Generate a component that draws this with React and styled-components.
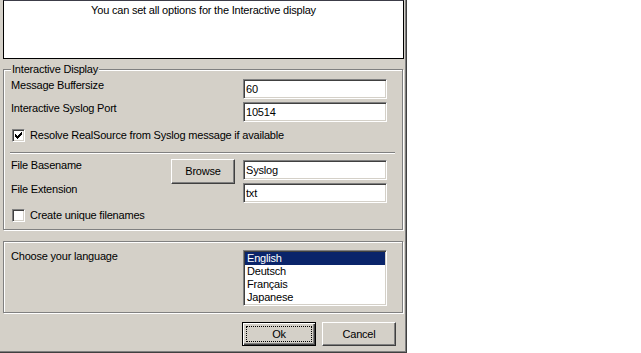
import React from 'react';
import styled, { createGlobalStyle } from 'styled-components';

const Global = createGlobalStyle`
  html, body { margin: 0; padding: 0; background: #fff; }
  body { font-family: "Liberation Sans", Arial, sans-serif; font-size: 11px; }
`;

const Dialog = styled.div`
  box-sizing: border-box;
  width: 407px;
  height: 353px;
  background: #d4d0c8;
  padding: 0 2px 0 3px;
  border-right: 1px solid #404040;
  border-bottom: 1px solid #404040;
  box-shadow: inset -1px -1px 0 #808080;
  display: flex;
  flex-direction: column;
  font-family: "Liberation Sans", Arial, sans-serif;
  font-size: 11px;
  line-height: 13px;
  letter-spacing: -0.2px;
  color: #000;
`;

const Description = styled.div`
  box-sizing: border-box;
  height: 59px;
  background: #fff;
  border: 1px solid #000;
  border-top-color: #3c3c48;
  padding-top: 3px;
  text-align: center;
`;

const Group = styled.fieldset`
  margin: ${(p) => p.$top}px 1px 0 0;
  padding: ${(p) => p.$pad};
  border: 1px solid #808080;
  box-shadow: 1px 1px 0 #fff, inset 1px 1px 0 #fff;
  min-inline-size: auto;
  display: flex;
  flex-direction: column;
`;

const Legend = styled.legend`
  margin: 0;
  padding: 0 1px;
  background: #d4d0c8;
  line-height: 13px;
`;

const FieldRow = styled.div`
  display: flex;
  align-items: flex-start;
  margin-top: ${(p) => p.$mt || 0}px;
`;

const Label = styled.span`
  flex: 1;
  line-height: 13px;
  margin-top: ${(p) => p.$mt || 0}px;
`;

const TextInput = styled.input`
  box-sizing: border-box;
  width: 144px;
  height: 20px;
  margin: 0;
  padding: 0 2px;
  font: inherit;
  letter-spacing: inherit;
  color: #000;
  background: #fff;
  border: 1px solid;
  border-color: #808080 #fff #fff #808080;
  box-shadow: inset 1px 1px 0 #404040, inset -1px -1px 0 #d4d0c8;
  outline: none;
`;

const CheckRow = styled.label`
  display: flex;
  align-items: center;
  gap: 5px;
  margin-top: ${(p) => p.$mt}px;
  padding-left: 1px;
  line-height: 13px;
`;

const CheckBox = styled.span`
  box-sizing: border-box;
  width: 13px;
  height: 13px;
  flex: none;
  background: #fff;
  border: 1px solid;
  border-color: #808080 #fff #fff #808080;
  box-shadow: inset 1px 1px 0 #404040, inset -1px -1px 0 #d4d0c8;
  display: flex;
  align-items: center;
  justify-content: center;
`;

const Separator = styled.div`
  height: 0;
  border-top: 1px solid #808080;
  border-bottom: 1px solid #fff;
  margin: 10px -8px 0 -1px;
`;

const FileGrid = styled.div`
  display: grid;
  grid-template-columns: 1fr 64px 144px;
  grid-template-rows: 20px 20px;
  column-gap: 8px;
  row-gap: 3px;
  margin-top: 6px;
`;

const Button = styled.button`
  box-sizing: border-box;
  width: ${(p) => p.$w}px;
  height: ${(p) => p.$h}px;
  margin: 0;
  padding: ${(p) => (p.$default ? '3px' : '0')};
  font: inherit;
  letter-spacing: inherit;
  color: #000;
  background: #d4d0c8;
  border: 1px solid;
  border-color: ${(p) => (p.$default ? '#000' : '#fff #404040 #404040 #fff')};
  box-shadow: ${(p) =>
    p.$default
      ? 'inset 1px 1px 0 #fff, inset -1px -1px 0 #404040, inset -2px -2px 0 #808080'
      : 'inset -1px -1px 0 #808080'};
  display: flex;
  align-items: center;
  justify-content: center;
  cursor: default;
`;

const BrowseButton = styled(Button)`
  grid-column: 2;
  grid-row: 1 / span 2;
  margin-top: -1px;
  align-self: start;
`;

const FocusRect = styled.span`
  flex: 1;
  align-self: stretch;
  border: 1px dotted #000;
  display: flex;
  align-items: center;
  justify-content: center;
`;

const ListBox = styled.div`
  box-sizing: border-box;
  width: 144px;
  height: 56px;
  padding: 1px;
  background: #fff;
  border: 1px solid;
  border-color: #808080 #fff #fff #808080;
  box-shadow: inset 1px 1px 0 #404040, inset -1px -1px 0 #d4d0c8;
  display: flex;
  flex-direction: column;
`;

const ListItem = styled.div`
  height: 13px;
  line-height: 13px;
  padding-left: 2px;
  background: ${(p) => (p.$selected ? '#0a246a' : 'transparent')};
  color: ${(p) => (p.$selected ? '#fff' : '#000')};
`;

const ButtonRow = styled.div`
  display: flex;
  justify-content: flex-end;
  gap: 6px;
  margin-top: 9px;
  padding-right: 8px;
`;

const Check = () => (
  <svg width="7" height="7" viewBox="0 0 7 7" shapeRendering="crispEdges">
    <path
      fill="#000"
      d="M6 0h1v1h-1z M5 1h2v1h-2z M0 2h1v1h-1z M4 2h3v1h-3z M0 3h2v1h-2z M3 3h3v1h-3z M0 4h5v1h-5z M1 5h3v1h-3z M2 6h1v1h-1z"
    />
  </svg>
);

export default function App() {
  return (
    <>
      <Global />
      <Dialog>
        <Description>You can set all options for the Interactive display</Description>

        <Group $top={4} $pad="3px 15px 7px 7px">
          <Legend>Interactive Display</Legend>
          <FieldRow>
            <Label>Message Buffersize</Label>
            <TextInput defaultValue="60" readOnly />
          </FieldRow>
          <FieldRow $mt={3}>
            <Label>Interactive Syslog Port</Label>
            <TextInput defaultValue="10514" readOnly />
          </FieldRow>
          <CheckRow $mt={7}>
            <CheckBox>
              <Check />
            </CheckBox>
            Resolve RealSource from Syslog message if available
          </CheckRow>
          <Separator />
          <FileGrid>
            <Label $mt={-1}>File Basename</Label>
            <BrowseButton $w={64} $h={25}>Browse</BrowseButton>
            <TextInput defaultValue="Syslog" readOnly />
            <Label>File Extension</Label>
            <TextInput style={{ gridColumn: 3 }} defaultValue="txt" readOnly />
          </FileGrid>
          <CheckRow $mt={6}>
            <CheckBox />
            Create unique filenames
          </CheckRow>
        </Group>

        <Group $top={11} $pad="8px 15px 6px 7px">
          <FieldRow>
            <Label>Choose your language</Label>
            <ListBox>
              <ListItem $selected>English</ListItem>
              <ListItem>Deutsch</ListItem>
              <ListItem>Français</ListItem>
              <ListItem>Japanese</ListItem>
            </ListBox>
          </FieldRow>
        </Group>

        <ButtonRow>
          <Button $w={74} $h={24} $default>
            <FocusRect>Ok</FocusRect>
          </Button>
          <Button $w={74} $h={24}>Cancel</Button>
        </ButtonRow>
      </Dialog>
    </>
  );
}
